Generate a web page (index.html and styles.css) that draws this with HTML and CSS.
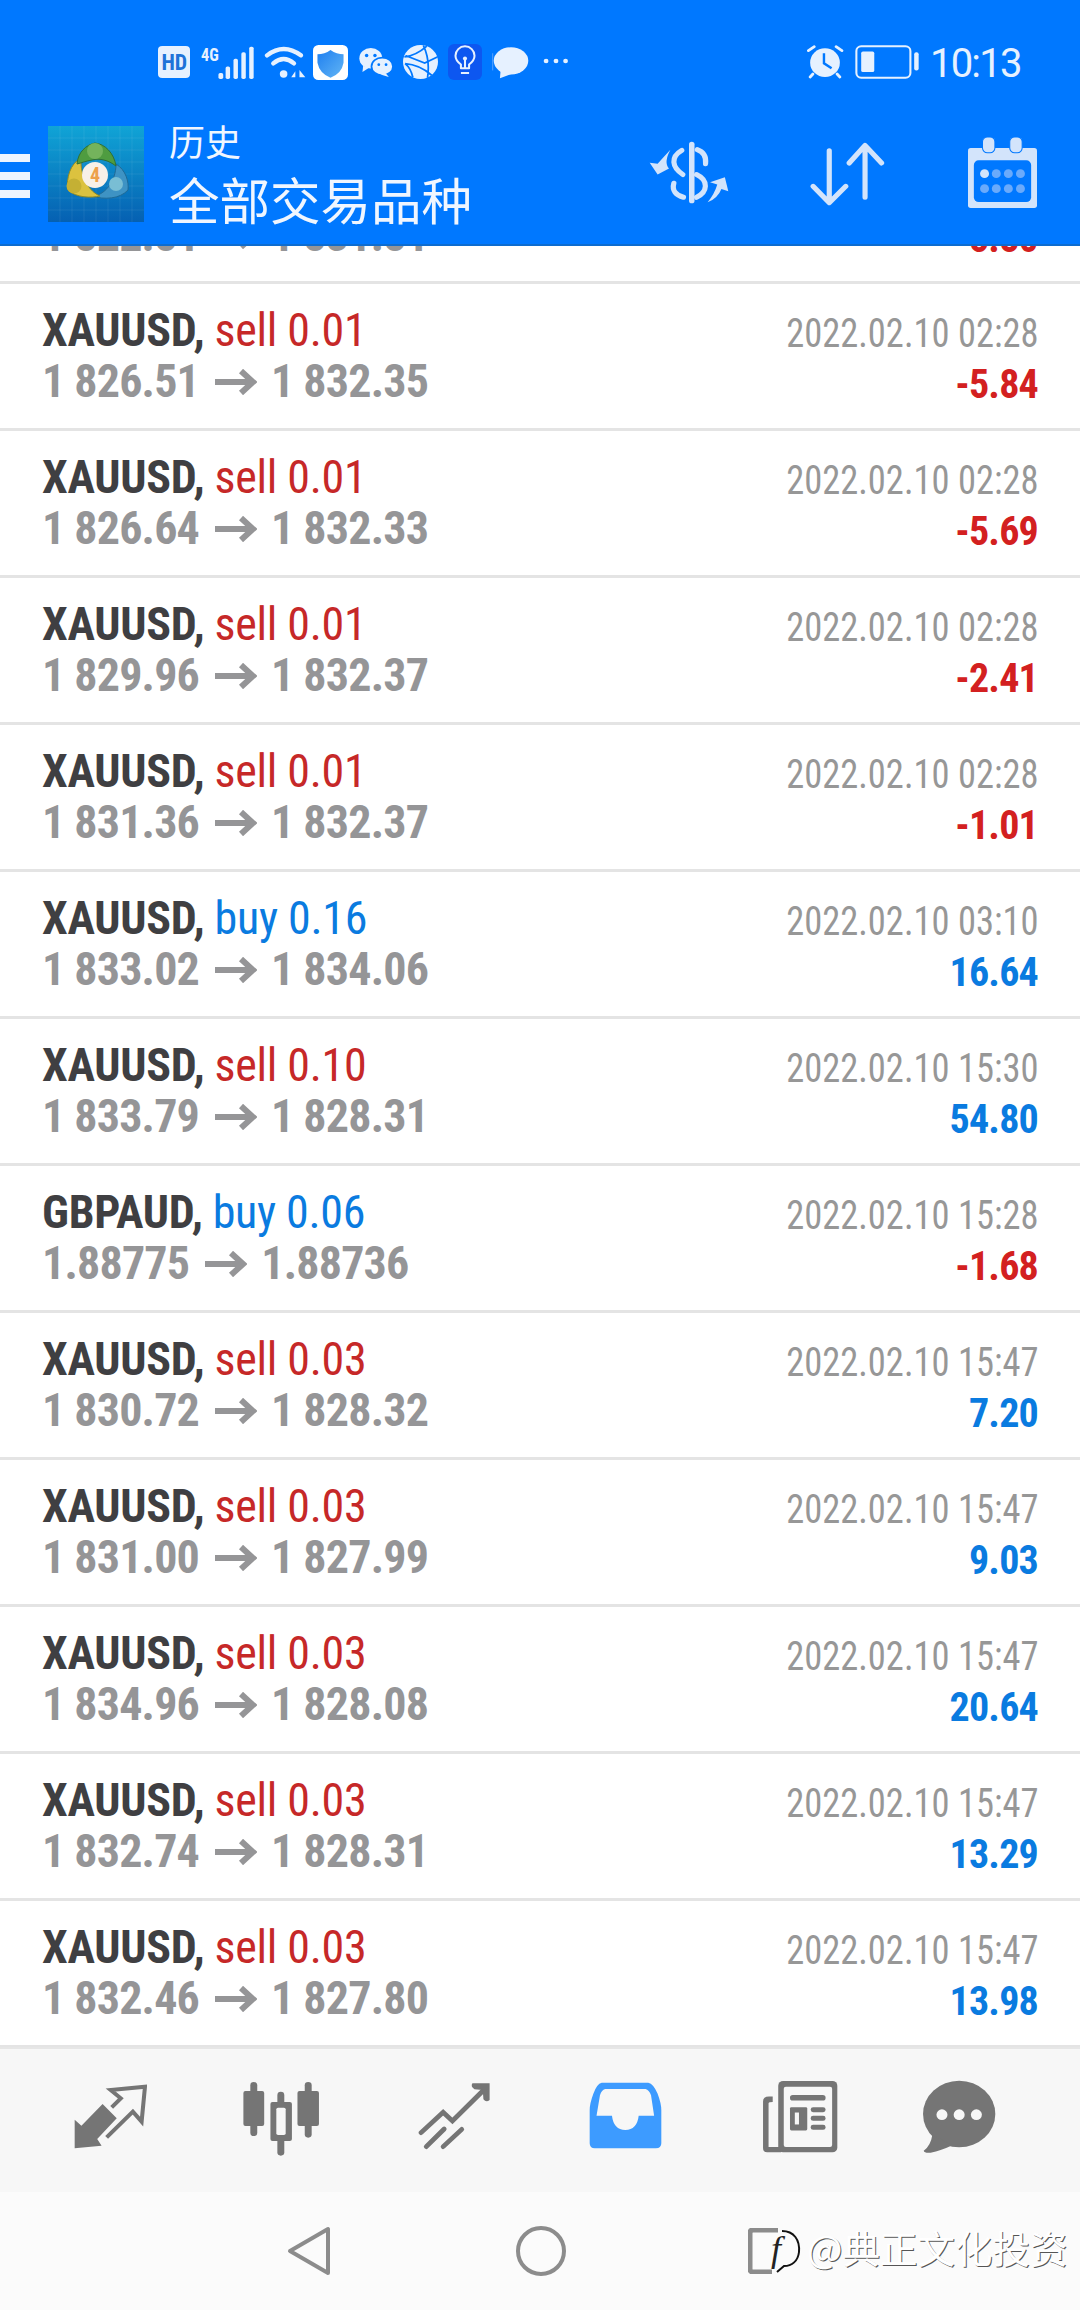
FILE: index.html
```html
<!DOCTYPE html>
<html lang="zh">
<head>
<meta charset="utf-8">
<title>历史</title>
<link rel="stylesheet" href="styles.css">
</head>
<body>
<div class="phone">
  <header class="header">
    <div class="status">
      <svg class="s-hd" viewBox="458 140 92 95" preserveAspectRatio="none"><rect x="458" y="140" width="92" height="95" rx="12" fill="#e6f1ff"/><text x="468" y="212" font-size="68" font-weight="700" font-family="Roboto Condensed" fill="#1f73d8" textLength="74" lengthAdjust="spacingAndGlyphs">HD</text></svg>
      <svg class="s-sig" viewBox="585 130 155 106" preserveAspectRatio="none"><text x="585" y="178" font-size="56" font-weight="700" font-family="Roboto Condensed" fill="#e6f1ff" textLength="52" lengthAdjust="spacingAndGlyphs">4G</text><g fill="#e6f1ff"><rect x="636" y="215" width="14" height="18" rx="5"/><rect x="657" y="195" width="13" height="38" rx="5"/><rect x="680" y="172" width="13" height="61" rx="5"/><rect x="703" y="152" width="13" height="81" rx="5"/><rect x="726" y="135" width="13" height="98" rx="5"/></g></svg>
      <svg class="s-wifi" viewBox="765 135 122 102" preserveAspectRatio="none"><g fill="none" stroke="#e6f1ff" stroke-width="13" stroke-linecap="round"><path d="M774 166Q822 128 872 166"/><path d="M792 190Q822 164 852 190"/></g><circle cx="822" cy="222" r="11" fill="#e6f1ff"/><path d="M844 232L856 214V232ZM868 210L885 232H868Z" fill="#e6f1ff"/></svg>
      <svg class="s-shield" viewBox="906 135 102 105" preserveAspectRatio="none"><defs><linearGradient id="sh" x1="0" y1="0" x2="1" y2="1"><stop offset="0" stop-color="#1e7ff0"/><stop offset="1" stop-color="#62b5f5"/></linearGradient></defs><rect x="906" y="135" width="102" height="105" rx="16" fill="#fff"/><path d="M957 150Q975 163 995 163V188Q990 220 957 233Q925 220 919 188V163Q940 163 957 150Z" fill="url(#sh)"/></svg>
      <svg class="s-chat" viewBox="1038 145 98 88" preserveAspectRatio="none"><ellipse cx="1072" cy="178" rx="33" ry="30" fill="#e6f1ff"/><path d="M1050 200L1048 218L1068 205Z" fill="#e6f1ff"/><ellipse cx="1105" cy="202" rx="31" ry="26" fill="#e6f1ff" stroke="#0078ff" stroke-width="5"/><path d="M1115 222L1124 233L1100 226Z" fill="#e6f1ff"/><g fill="#0078ff"><circle cx="1060" cy="170" r="5"/><circle cx="1084" cy="170" r="5"/><circle cx="1095" cy="197" r="4"/><circle cx="1116" cy="197" r="4"/></g></svg>
      <svg class="s-globe" viewBox="1168 137 100 100" preserveAspectRatio="none"><circle cx="1218" cy="187" r="50" fill="#e6f1ff"/><path d="M1172 172Q1205 168 1236 140M1174 192Q1215 195 1250 226M1226 138Q1246 180 1238 234M1174 192Q1190 205 1196 232M1175 168L1230 190L1266 172" fill="none" stroke="#0078ff" stroke-width="5"/></svg>
      <svg class="s-bulb" viewBox="1298 133 100 107" preserveAspectRatio="none"><rect x="1298" y="133" width="100" height="107" rx="18" fill="#0d57f0"/><path d="M1336 205V194Q1320 182 1320 168A28 28 0 0 1 1376 168Q1376 182 1360 194V205Z" fill="none" stroke="#e6f1ff" stroke-width="6" stroke-linejoin="round"/><path d="M1336 219H1360M1348 178V204" stroke="#e6f1ff" stroke-width="6"/><circle cx="1348" cy="176" r="6" fill="#e6f1ff"/></svg>
      <svg class="s-msg" viewBox="1425 138 107 100" preserveAspectRatio="none"><path d="M1427 160V212" stroke="#7fb8ff" stroke-width="2"/><ellipse cx="1480" cy="183" rx="50" ry="41" fill="#e6f1ff"/><path d="M1450 210L1448 236L1482 222Z" fill="#e6f1ff"/></svg>
      <svg class="s-dots" viewBox="4 175 76 18" preserveAspectRatio="none"><g fill="#e6f1ff"><circle cx="13" cy="184" r="7"/><circle cx="42" cy="184" r="7"/><circle cx="70" cy="184" r="7"/></g></svg>
      <svg class="s-alarm" viewBox="768 135 110 102" preserveAspectRatio="none"><circle cx="823" cy="188" r="43" fill="#e6f1ff"/><path d="M775 152L792 140M855 140L872 152M788 222L780 231M858 222L866 231" stroke="#e6f1ff" stroke-width="8" stroke-linecap="round"/><path d="M820 160V190L842 205" fill="none" stroke="#0078ff" stroke-width="7"/></svg>
      <svg class="s-batt" viewBox="910 133 186 103" preserveAspectRatio="none"><rect x="914" y="137" width="157" height="95" rx="14" fill="none" stroke="#e6f1ff" stroke-width="6"/><rect x="928" y="153" width="38" height="62" rx="5" fill="#e6f1ff"/><rect x="1082" y="155" width="13" height="55" rx="6" fill="#e6f1ff"/></svg>
      <span class="clock">10:13</span>
    </div>
    <div class="toolbar">
      <div class="burger"><i></i><i></i><i></i></div>
      <svg class="logo" viewBox="0 0 96 96">
        <defs><linearGradient id="tile" x1="0" y1="0" x2="0" y2="1"><stop offset="0" stop-color="#10a4d6"/><stop offset="1" stop-color="#0560b2"/></linearGradient></defs>
        <rect width="96" height="96" fill="url(#tile)"/>
        <path d="M12 0V96M24 0V96M36 0V96M48 0V96M60 0V96M72 0V96M84 0V96M0 12H96M0 24H96M0 36H96M0 48H96M0 60H96M0 72H96M0 84H96" stroke="#fff" stroke-opacity=".07" stroke-width="1"/>
        <path d="M68 38C78 44 81 56 80 64C72 73 56 74 44 70C56 70 68 56 68 38Z" fill="#3e93c4" stroke="#1f6a96" stroke-width="1"/>
        <circle cx="68" cy="58" r="7" fill="#79bed4"/>
        <path d="M33 32C22 38 18 52 20 64C28 72 44 72 52 70C42 66 32 52 33 32Z" fill="#dcc23f" stroke="#8f8a25" stroke-width="1"/>
        <circle cx="26" cy="60" r="7.5" fill="#c4b034"/>
        <path d="M29 38C30 26 38 19 47 17C57 18 66 27 68 40C60 34 52 32 44 34C38 35 33 37 29 38Z" fill="#4f9c40" stroke="#2f6f36" stroke-width="1"/>
        <circle cx="47" cy="25" r="8" fill="#74b35c"/>
        <circle cx="47" cy="49" r="13" fill="#f7f0e8"/>
        <text x="47" y="56" text-anchor="middle" font-size="20" font-weight="700" font-family="Roboto Condensed" fill="#eda04a">4</text>
      </svg>
      <div class="titles">
        <div class="t-small">历史</div>
        <div class="t-big">全部交易品种</div>
      </div>
      <svg class="a-dollar" viewBox="320 422 232 188" preserveAspectRatio="none"><g fill="none" stroke="#d3e4fb" stroke-linecap="round"><path d="M444 432V600" stroke-width="16"/><path d="M460 448C482 456 486 472 484 490" stroke-width="15"/><path d="M415 450C382 470 386 500 418 522" stroke-width="15"/><path d="M392 548C386 570 398 584 420 590" stroke-width="15"/><path d="M458 522C494 540 490 574 458 590" stroke-width="15"/></g><path d="M322 487L345 490Q362 470 382 448Q362 486 378 504L345 522Z" fill="#d3e4fb"/><path d="M490 605Q510 580 518 552L497 545L540 530L550 572L530 565Q520 592 490 605Z" fill="#d3e4fb"/></svg>
      <svg class="a-sort" viewBox="780 424 218 192" preserveAspectRatio="none"><g fill="none" stroke="#d3e4fb" stroke-width="15" stroke-linecap="round" stroke-linejoin="round"><path d="M836 450V605M789 557L836 606L884 557"/><path d="M940 590V436M894 487L940 434L988 487"/></g></svg>
      <svg class="a-cal" viewBox="1243 410 200 213" preserveAspectRatio="none"><rect x="1243" y="443" width="200" height="180" rx="8" fill="#d3e4fb"/><rect x="1260" y="480" width="166" height="125" rx="14" fill="#0078ff"/><rect x="1285" y="410" width="36" height="47" rx="14" fill="#d3e4fb" stroke="#0078ff" stroke-width="3"/><rect x="1364" y="410" width="36" height="47" rx="14" fill="#d3e4fb" stroke="#0078ff" stroke-width="3"/><g fill="#6aaafb"><circle cx="1291" cy="520" r="13" fill="#d3e4fb"/><circle cx="1325" cy="520" r="13"/><circle cx="1360" cy="520" r="13"/><circle cx="1395" cy="520" r="13"/><circle cx="1291" cy="565" r="13"/><circle cx="1325" cy="565" r="13"/><circle cx="1360" cy="565" r="13"/><circle cx="1395" cy="565" r="13"/></g></svg>
    </div>
  </header>

  <main class="list">
    <div class="row row-cut">
      <div class="line"><span class="price">1 822.81</span><svg class="arrow" viewBox="0 0 42 26"><path d="M0 13H38M26 2L38 13L26 24" fill="none" stroke="#959597" stroke-width="6"/></svg><span class="price">1 831.81</span><span class="profit neg">-5.80</span></div>
    </div>
    <div class="row"><div class="line"><b class="sym">XAUUSD,</b><span class="sell">sell 0.01</span><span class="date">2022.02.10 02:28</span></div><div class="line"><span class="price">1 826.51</span><svg class="arrow" viewBox="0 0 42 26"><path d="M0 13H38M26 2L38 13L26 24" fill="none" stroke="#959597" stroke-width="6"/></svg><span class="price">1 832.35</span><span class="profit neg">-5.84</span></div></div>
    <div class="row"><div class="line"><b class="sym">XAUUSD,</b><span class="sell">sell 0.01</span><span class="date">2022.02.10 02:28</span></div><div class="line"><span class="price">1 826.64</span><svg class="arrow" viewBox="0 0 42 26"><path d="M0 13H38M26 2L38 13L26 24" fill="none" stroke="#959597" stroke-width="6"/></svg><span class="price">1 832.33</span><span class="profit neg">-5.69</span></div></div>
    <div class="row"><div class="line"><b class="sym">XAUUSD,</b><span class="sell">sell 0.01</span><span class="date">2022.02.10 02:28</span></div><div class="line"><span class="price">1 829.96</span><svg class="arrow" viewBox="0 0 42 26"><path d="M0 13H38M26 2L38 13L26 24" fill="none" stroke="#959597" stroke-width="6"/></svg><span class="price">1 832.37</span><span class="profit neg">-2.41</span></div></div>
    <div class="row"><div class="line"><b class="sym">XAUUSD,</b><span class="sell">sell 0.01</span><span class="date">2022.02.10 02:28</span></div><div class="line"><span class="price">1 831.36</span><svg class="arrow" viewBox="0 0 42 26"><path d="M0 13H38M26 2L38 13L26 24" fill="none" stroke="#959597" stroke-width="6"/></svg><span class="price">1 832.37</span><span class="profit neg">-1.01</span></div></div>
    <div class="row"><div class="line"><b class="sym">XAUUSD,</b><span class="buy">buy 0.16</span><span class="date">2022.02.10 03:10</span></div><div class="line"><span class="price">1 833.02</span><svg class="arrow" viewBox="0 0 42 26"><path d="M0 13H38M26 2L38 13L26 24" fill="none" stroke="#959597" stroke-width="6"/></svg><span class="price">1 834.06</span><span class="profit pos">16.64</span></div></div>
    <div class="row"><div class="line"><b class="sym">XAUUSD,</b><span class="sell">sell 0.10</span><span class="date">2022.02.10 15:30</span></div><div class="line"><span class="price">1 833.79</span><svg class="arrow" viewBox="0 0 42 26"><path d="M0 13H38M26 2L38 13L26 24" fill="none" stroke="#959597" stroke-width="6"/></svg><span class="price">1 828.31</span><span class="profit pos">54.80</span></div></div>
    <div class="row"><div class="line"><b class="sym">GBPAUD,</b><span class="buy">buy 0.06</span><span class="date">2022.02.10 15:28</span></div><div class="line"><span class="price">1.88775</span><svg class="arrow" viewBox="0 0 42 26"><path d="M0 13H38M26 2L38 13L26 24" fill="none" stroke="#959597" stroke-width="6"/></svg><span class="price">1.88736</span><span class="profit neg">-1.68</span></div></div>
    <div class="row"><div class="line"><b class="sym">XAUUSD,</b><span class="sell">sell 0.03</span><span class="date">2022.02.10 15:47</span></div><div class="line"><span class="price">1 830.72</span><svg class="arrow" viewBox="0 0 42 26"><path d="M0 13H38M26 2L38 13L26 24" fill="none" stroke="#959597" stroke-width="6"/></svg><span class="price">1 828.32</span><span class="profit pos">7.20</span></div></div>
    <div class="row"><div class="line"><b class="sym">XAUUSD,</b><span class="sell">sell 0.03</span><span class="date">2022.02.10 15:47</span></div><div class="line"><span class="price">1 831.00</span><svg class="arrow" viewBox="0 0 42 26"><path d="M0 13H38M26 2L38 13L26 24" fill="none" stroke="#959597" stroke-width="6"/></svg><span class="price">1 827.99</span><span class="profit pos">9.03</span></div></div>
    <div class="row"><div class="line"><b class="sym">XAUUSD,</b><span class="sell">sell 0.03</span><span class="date">2022.02.10 15:47</span></div><div class="line"><span class="price">1 834.96</span><svg class="arrow" viewBox="0 0 42 26"><path d="M0 13H38M26 2L38 13L26 24" fill="none" stroke="#959597" stroke-width="6"/></svg><span class="price">1 828.08</span><span class="profit pos">20.64</span></div></div>
    <div class="row"><div class="line"><b class="sym">XAUUSD,</b><span class="sell">sell 0.03</span><span class="date">2022.02.10 15:47</span></div><div class="line"><span class="price">1 832.74</span><svg class="arrow" viewBox="0 0 42 26"><path d="M0 13H38M26 2L38 13L26 24" fill="none" stroke="#959597" stroke-width="6"/></svg><span class="price">1 828.31</span><span class="profit pos">13.29</span></div></div>
    <div class="row"><div class="line"><b class="sym">XAUUSD,</b><span class="sell">sell 0.03</span><span class="date">2022.02.10 15:47</span></div><div class="line"><span class="price">1 832.46</span><svg class="arrow" viewBox="0 0 42 26"><path d="M0 13H38M26 2L38 13L26 24" fill="none" stroke="#959597" stroke-width="6"/></svg><span class="price">1 827.80</span><span class="profit pos">13.98</span></div></div>
  </main>

  <nav class="tabs">
    <svg class="tab-trade" viewBox="210 165 220 198" preserveAspectRatio="none"><path d="M215 272V358L295 350L282 330L340 268L298 225L235 290Z" fill="#757575"/><path d="M325 235L352 208L322 183L424 173L414 278L388 248L310 325" fill="none" stroke="#757575" stroke-width="12"/></svg>
    <svg class="tab-chart" viewBox="705 150 225 228" preserveAspectRatio="none"><g fill="#757575"><rect x="729" y="153" width="20" height="162" rx="10"/><rect x="709" y="180" width="60" height="105" rx="6"/><rect x="807" y="182" width="20" height="192" rx="10"/><rect x="787" y="213" width="62" height="117" rx="6"/><rect x="886" y="153" width="20" height="167" rx="10"/><rect x="865" y="180" width="62" height="105" rx="6"/></g><rect x="804" y="230" width="27" height="82" rx="5" fill="#f7f7f7"/></svg>
    <svg class="tab-trend" viewBox="1212 158 212 204" preserveAspectRatio="none"><g fill="none" stroke="#757575" stroke-width="14" stroke-linecap="round"><path d="M1221 310L1285 249L1312 275L1400 185"/><path d="M1236 352L1288 299M1285 352L1339 300"/></g><path d="M1370 162H1420V212Q1410 220 1402 210L1400 182L1376 180Q1364 172 1370 162Z" fill="#757575"/></svg>
    <svg class="tab-history" viewBox="145 160 213 202" preserveAspectRatio="none"><path d="M182 162H318Q333 165 345 195Q356 225 356 245V345Q356 360 340 360H162Q147 360 147 345V245Q147 225 158 195Q168 165 182 162Z" fill="#3d9bff"/><path d="M192 181H310Q320 183 326 200L335 262H290Q285 305 251 305Q217 305 212 262H167L177 200Q182 183 192 181Z" fill="#f7f7f7"/></svg>
    <svg class="tab-news" viewBox="645 150 220 220" preserveAspectRatio="none"><rect x="692" y="153" width="171" height="215" rx="14" fill="#757575"/><rect x="708" y="170" width="140" height="182" rx="6" fill="#f7f7f7"/><path d="M676 200H665Q648 200 648 215V355Q648 368 660 368H700V352H664V220Q664 216 676 216Z" fill="#757575"/><g fill="#757575"><rect x="726" y="195" width="103" height="17" rx="8"/><rect x="726" y="232" width="50" height="70" rx="4"/><rect x="786" y="232" width="43" height="15" rx="7"/><rect x="786" y="258" width="43" height="15" rx="7"/><rect x="786" y="285" width="43" height="15" rx="7"/></g><rect x="740" y="248" width="12" height="36" fill="#f7f7f7"/></svg>
    <svg class="tab-chat" viewBox="1105 150 215 222" preserveAspectRatio="none"><ellipse cx="1213" cy="252" rx="105" ry="100" fill="#757575"/><path d="M1135 315Q1130 348 1110 362Q1112 370 1130 368Q1160 362 1195 345Z" fill="#757575"/><g fill="#f7f7f7"><circle cx="1163" cy="254" r="16"/><circle cx="1213" cy="254" r="16"/><circle cx="1263" cy="254" r="16"/></g></svg>
  </nav>

  <footer class="navbar">
    <svg class="nav-back" viewBox="0 0 44 50"><path d="M3 25L41 3V47Z" fill="none" stroke="#8c8c8c" stroke-width="4" stroke-linejoin="round"/></svg>
    <svg class="nav-home" viewBox="0 0 50 50"><circle cx="25" cy="25" r="23" fill="none" stroke="#8c8c8c" stroke-width="4"/></svg>
    <svg class="nav-recent" viewBox="0 0 46 46"><path d="M30 2H5Q2 2 2 5V41Q2 44 5 44H24" fill="none" stroke="#8c8c8c" stroke-width="5"/></svg>
    <div class="mark">
      <svg class="mark-logo" viewBox="0 0 34 46"><path d="M14 3C26 3 32 12 31 24C30 33 24 38 16 38L9 44" fill="none" stroke="#111" stroke-width="2"/><text x="3" y="33" font-size="36" font-style="italic" font-family="Liberation Serif" fill="#222">f</text></svg>
      <span class="mark-text">@典正文化投资</span>
    </div>
  </footer>
</div>
</body>
</html>
```
FILE: styles.css
```css
* { box-sizing: border-box; }
html, body { margin: 0; padding: 0; }
body { width: 1080px; height: 2310px; overflow: hidden; background: #fff; font-family: "Roboto Condensed", Roboto, sans-serif; }
.phone { width: 1080px; height: 2310px; display: flex; flex-direction: column; overflow: hidden; }
svg { display: block; flex: none; }

.header { height: 246px; flex: none; background: #0078ff; border-bottom: 2px solid #0d6ccf; position: relative; z-index: 2; }
.status { height: 124px; display: flex; align-items: center; padding-left: 158px; }
.s-hd { width: 32px; height: 32px; }
.s-sig { width: 53px; height: 35px; margin-left: 11px; }
.s-wifi { width: 42px; height: 34px; margin-left: 10px; }
.s-shield { width: 35px; height: 35px; margin-left: 7px; }
.s-chat { width: 34px; height: 30px; margin-left: 11px; }
.s-globe { width: 35px; height: 34px; margin-left: 10px; }
.s-bulb { width: 34px; height: 36px; margin-left: 10px; }
.s-msg { width: 37px; height: 33px; margin-left: 10px; }
.s-dots { width: 26px; height: 6px; margin-left: 14px; margin-top: -3px; }
.s-alarm { width: 38px; height: 34px; margin-left: 237px; }
.s-batt { width: 64px; height: 34px; margin-left: 11px; }
.clock { margin-left: 11px; font: 400 40px/1 Roboto, sans-serif; letter-spacing: -1.8px; color: #e6f1ff; padding-top: 4px; }

.toolbar { height: 120px; display: flex; align-items: flex-start; }
.burger { width: 30px; margin-top: 30px; display: flex; flex-direction: column; gap: 10px; }
.burger i { display: block; height: 8px; background: #eef5ff; }
.logo { width: 96px; height: 96px; margin: 2px 0 0 18px; }
.titles { margin-left: 25px; margin-top: -5px; color: #f0f6ff; font-family: "Noto Sans CJK SC", sans-serif; width: 480px; }
.t-small { font-size: 36px; line-height: 42px; }
.t-big { font-size: 50.5px; line-height: 58px; margin-top: 8px; }
.a-dollar { width: 80px; height: 63px; margin: 17px 0 0 0; }
.a-sort { width: 75px; height: 64px; margin: 18px 0 0 81px; }
.a-cal { width: 69px; height: 71px; margin: 13px 0 0 83px; }

.list { flex: 1; min-height: 0; overflow: hidden; }
.row { height: 147px; padding: 21px 42px 0 42px; border-bottom: 3px solid #e4e4e4; }
.row-cut { height: 38px; padding: 0 42px 20px 42px; display: flex; flex-direction: column; justify-content: flex-end; overflow: hidden; }
.line { display: flex; align-items: baseline; height: 51px; line-height: 51px; flex: none; }
.sym { font-size: 46px; font-weight: 700; color: #3f3f42; letter-spacing: -0.3px; }
.sell, .buy { font-size: 46px; margin-left: 10px; letter-spacing: -0.3px; }
.sell { color: #c62828; }
.buy { color: #0a7be0; }
.date { margin-left: auto; font-size: 41px; color: #979797; transform: translateY(1px) scaleX(0.89); transform-origin: right center; }
.price { font-size: 46px; font-weight: 700; color: #959597; letter-spacing: -0.8px; }
.arrow { width: 42px; height: 26px; margin: 0 14px 0 16px; align-self: center; }
.profit { margin-left: auto; font-size: 40px; font-weight: 700; letter-spacing: -0.8px; transform: translateY(1px); }
.neg { color: #d32020; }
.pos { color: #0a7be0; }

.tabs { height: 145px; flex: none; background: #f7f7f7; border-top: 2px solid #e6e6e6; display: grid; grid-template-columns: 73px 72px 97px 75px 101px 71px 100px 72px 101px 74px 86px 72px; align-items: start; }
.tab-trade { width: 74px; height: 66px; grid-column: 2 / span 2; margin-top: 35px; }
.tab-chart { width: 78px; height: 76px; grid-column: 4 / span 2; margin-top: 32px; }
.tab-trend { width: 73px; height: 68px; grid-column: 6 / span 2; margin-top: 33px; }
.tab-history { width: 73px; height: 67px; grid-column: 8 / span 2; margin-top: 33px; }
.tab-news { width: 76px; height: 73px; grid-column: 10 / span 2; margin-top: 31px; }
.tab-chat { width: 74px; height: 74px; grid-column: 12; margin-top: 31px; }

.navbar { height: 118px; flex: none; background: #fbfbfb; display: flex; align-items: center; padding-left: 287px; position: relative; }
.nav-back { width: 44px; height: 50px; }
.nav-home { width: 50px; height: 50px; margin-left: 185px; }
.nav-recent { width: 46px; height: 46px; margin-left: 182px; }
.mark { position: absolute; left: 768px; top: 28px; display: flex; align-items: center; }
.mark-logo { width: 34px; height: 46px; margin-top: 8px; }
.mark-text { margin-left: 5px; font: 37.5px/48px "Noto Sans CJK SC", "Liberation Serif", serif; color: #fff; text-shadow: 1px 1px 0 #555; white-space: nowrap; }
```
